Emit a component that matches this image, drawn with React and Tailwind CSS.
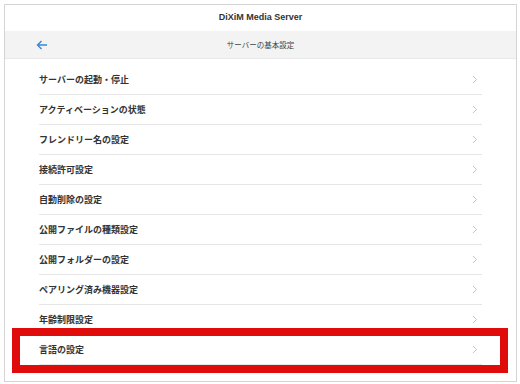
import React from "react";

const items = [
  "サーバーの起動・停止",
  "アクティベーションの状態",
  "フレンドリー名の設定",
  "接続許可設定",
  "自動削除の設定",
  "公開ファイルの種類設定",
  "公開フォルダーの設定",
  "ペアリング済み機器設定",
  "年齢制限設定",
  "言語の設定",
];

const Chevron = () => (
  <svg width="6" height="9" viewBox="0 0 6 9" fill="none">
    <path d="M1 1l3.5 3.5L1 8" stroke="#c4c4c4" strokeWidth="1" />
  </svg>
);

export default function App() {
  return (
    <div
      className="w-[520px] h-[384px] bg-white p-[4px] relative"
      style={{ fontFamily: '"Noto Sans CJK JP", "Noto Sans", sans-serif' }}
    >
      <div className="h-[378px] w-[513px] border border-[#d4d4d4] flex flex-col">
        <div className="h-[26px] flex items-center justify-center text-[9px] font-semibold text-[#333]" style={{ fontFamily: '"Liberation Sans", "Noto Sans CJK JP", sans-serif' }}>
          DiXiM Media Server
        </div>
        <div className="h-[28px] bg-[#f3f3f3] border-b border-[#e8e8e8] flex items-center relative">
          <svg className="absolute left-[31px]" width="12" height="10" viewBox="0 0 12 10" fill="none">
            <path d="M11 5H1.5M5.5 1L1.5 5l4 4" stroke="#3a86d8" strokeWidth="1.4" />
          </svg>
          <div className="flex-1 text-center text-[7.5px] text-[#444]">サーバーの基本設定</div>
        </div>
        <div className="pt-[6px] pl-[34px] pr-[34px]">
          {items.map((t) => (
            <div
              key={t}
              className="h-[30px] border-b border-[#e6e6e6] flex items-center justify-between text-[9px] font-bold text-[#333]"
            >
              <span>{t}</span>
              <span className="pr-[4px]">
                <Chevron />
              </span>
            </div>
          ))}
        </div>
      </div>
      <div className="absolute left-[12px] top-[328px] w-[496px] h-[45px] border-[8px] border-[#e00b0b]" />
    </div>
  );
}
